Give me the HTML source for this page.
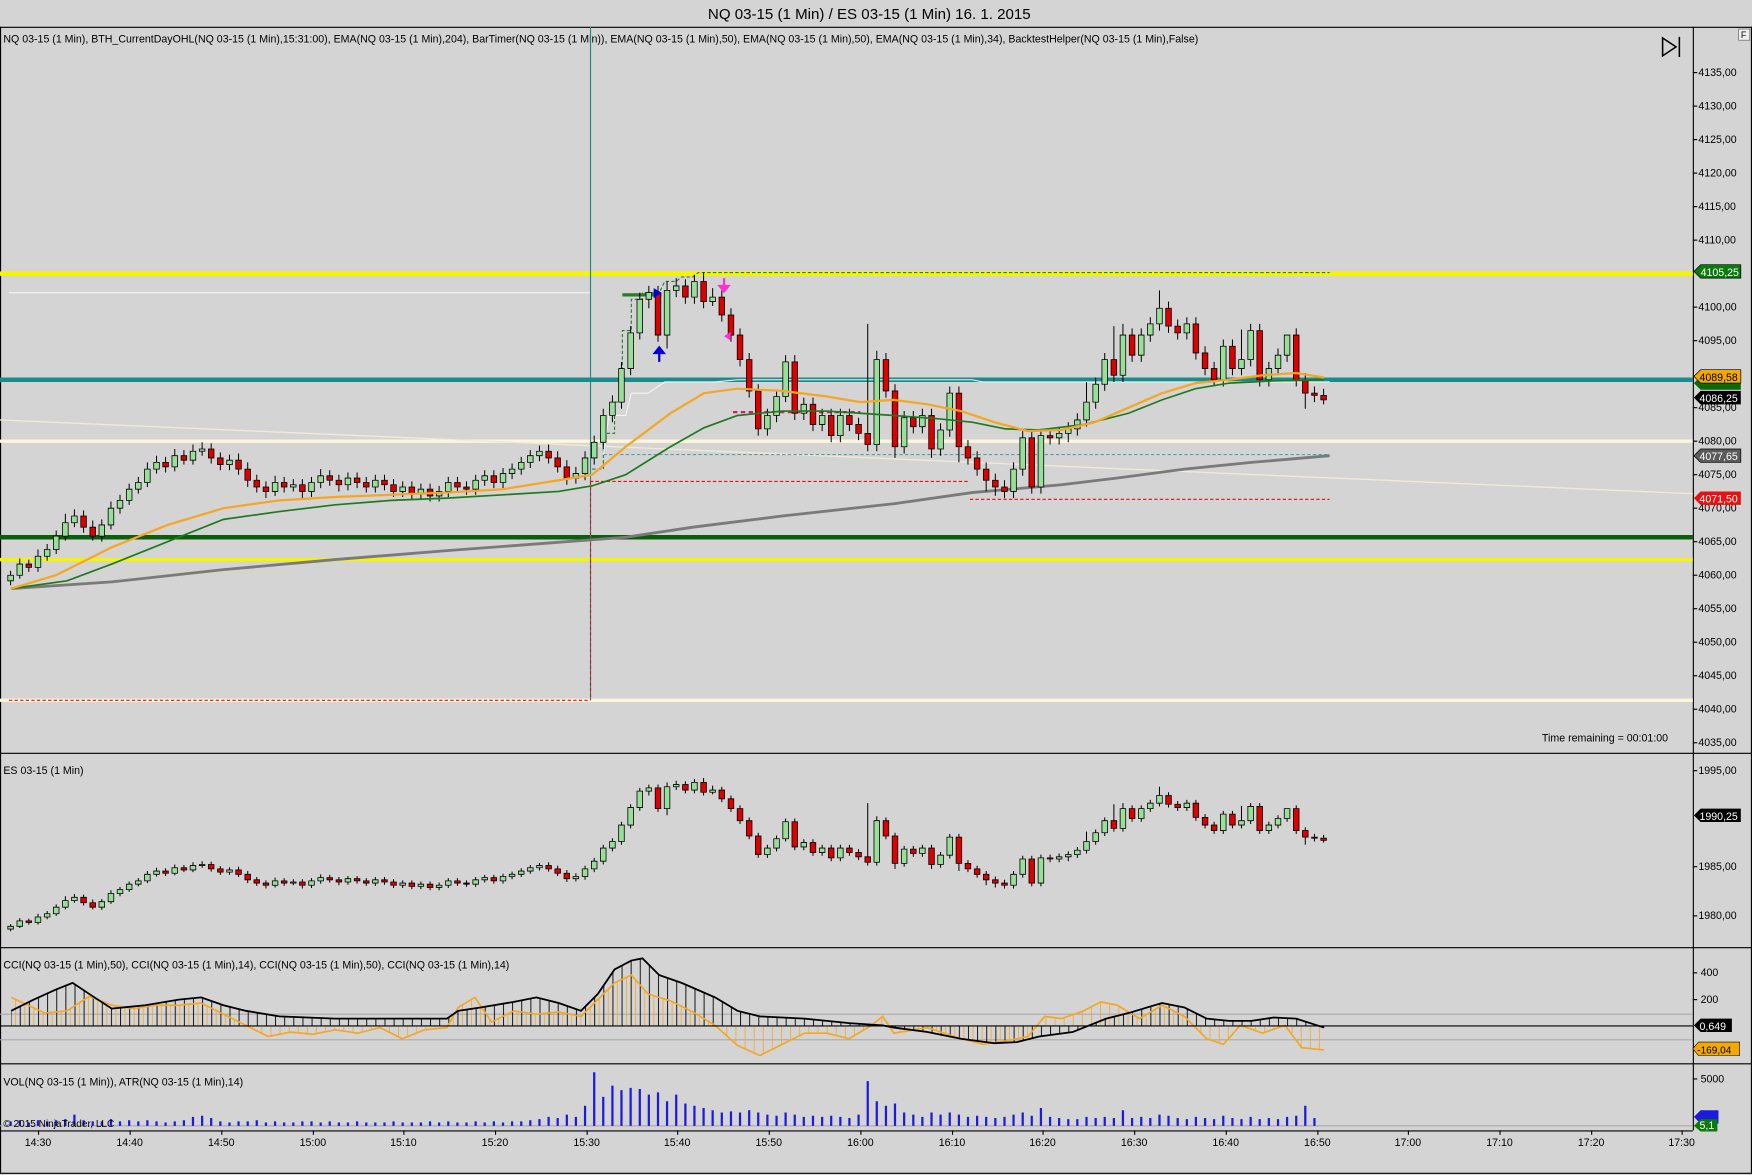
<!DOCTYPE html>
<html><head><meta charset="utf-8">
<style>
html,body{margin:0;padding:0;background:#d4d4d4;overflow:hidden}
svg{display:block}
text{font-family:"Liberation Sans",Arial,sans-serif;fill:#000}
</style></head>
<body>
<svg xmlns="http://www.w3.org/2000/svg" xmlns:xlink="http://www.w3.org/1999/xlink" width="1752" height="1175" viewBox="0 0 1568 1052" preserveAspectRatio="none">
<defs>
<pattern id="hb" x="9.5" y="0" width="8.16" height="20" patternUnits="userSpaceOnUse"><line x1="0.5" y1="0" x2="0.5" y2="20" stroke="#000" stroke-width="0.8"/></pattern>
<pattern id="ho" x="13.5" y="0" width="8.16" height="20" patternUnits="userSpaceOnUse"><line x1="0.5" y1="0" x2="0.5" y2="20" stroke="#f5a623" stroke-width="0.7"/></pattern>
</defs>
<rect x="0" y="0" width="1568" height="1052" fill="#d4d4d4"/>
<text x="778" y="17" font-size="13.5" text-anchor="middle">NQ 03-15 (1 Min) / ES 03-15 (1 Min)  16. 1. 2015</text>
<g stroke="#000" stroke-width="1" fill="none">
<line x1="0" y1="24.5" x2="1568" y2="24.5"/>
<line x1="0" y1="674.5" x2="1568" y2="674.5"/>
<line x1="0" y1="848.5" x2="1568" y2="848.5"/>
<line x1="0" y1="952.5" x2="1568" y2="952.5"/>
<line x1="0" y1="1012.5" x2="1515" y2="1012.5"/>
<line x1="1515.5" y1="24" x2="1515.5" y2="1012"/>
<line x1="0.5" y1="24" x2="0.5" y2="1050"/>
<line x1="0" y1="1050.5" x2="1568" y2="1050.5"/>
<line x1="1567.5" y1="24" x2="1567.5" y2="1050"/>
</g>
<rect x="1556" y="26" width="10" height="10" fill="#eee" stroke="#666" stroke-width="0.6"/>
<text x="1558" y="34" font-size="8">F</text>
<g stroke="#000" stroke-width="1.4" fill="none"><path d="M1488 34 L1500 42 L1488 50 Z"/><line x1="1503" y1="33" x2="1503" y2="51"/></g>

<text x="3" y="38" font-size="9.5">NQ 03-15 (1 Min), BTH_CurrentDayOHL(NQ 03-15 (1 Min),15:31:00), EMA(NQ 03-15 (1 Min),204), BarTimer(NQ 03-15 (1 Min)), EMA(NQ 03-15 (1 Min),50), EMA(NQ 03-15 (1 Min),50), EMA(NQ 03-15 (1 Min),34), BacktestHelper(NQ 03-15 (1 Min),False)</text>

<line x1="0" y1="245" x2="1515" y2="245" stroke="#f5f500" stroke-width="4"/>
<line x1="0" y1="340" x2="1515" y2="340" stroke="#1a8c8c" stroke-width="4"/>
<line x1="0" y1="395" x2="1515" y2="395" stroke="#fdf6dc" stroke-width="3"/>
<line x1="0" y1="481" x2="1515" y2="481" stroke="#0b5e0b" stroke-width="4"/>
<line x1="0" y1="501" x2="1515" y2="501" stroke="#f5f500" stroke-width="3"/>
<line x1="0" y1="627" x2="1515" y2="627" stroke="#fdf6dc" stroke-width="3"/>
<line x1="0" y1="376" x2="1515" y2="442" stroke="#f0ead6" stroke-width="1.2"/>
<line x1="8" y1="262" x2="528" y2="262" stroke="#f4f4f4" stroke-width="1"/>
<line x1="528.5" y1="24" x2="528.5" y2="627" stroke="#1a8c7c" stroke-width="1"/>
<g stroke="#e01010" stroke-width="1" stroke-dasharray="3,2" fill="none">
<line x1="8" y1="627" x2="528" y2="627"/>
<line x1="528.5" y1="431" x2="528.5" y2="627"/>
<line x1="528" y1="431" x2="868" y2="431"/>
<line x1="868" y1="447" x2="1190" y2="447"/>
</g>
<line x1="656" y1="369" x2="770" y2="369" stroke="#d02060" stroke-width="2" stroke-dasharray="4,3"/>
<polyline fill="none" stroke="#2a7a2a" stroke-width="1" stroke-dasharray="3,2" points="530,420 540,420 540,388 550,388 550,360 557,360 557,296 565,296 565,268 575,268 575,262 590,262 595,252 605,252 610,248 620,248 625,244 1190,244"/>
<line x1="540" y1="407" x2="1190" y2="407" stroke="#5aa0a0" stroke-width="1" stroke-dasharray="3,2"/>
<polyline fill="none" stroke="#f4f4f4" stroke-width="1" points="540,407 545,372 560,372 565,352 580,352 595,342 640,342 660,340 870,340 880,342 1190,342"/>
<polyline fill="none" stroke="#7a7a7a" stroke-width="2.5" points="10,527 100,521 200,510 300,501 400,493 480,487 560,481 620,472 700,462 800,451 870,441 950,434 1000,428 1060,420 1120,414 1190,408"/>
<line x1="557" y1="264" x2="592" y2="264" stroke="#2a7a2a" stroke-width="3"/>

<g id="cd">
<path vector-effect="non-scaling-stroke" fill="none" stroke="#000" stroke-width="1" d="M9.5,511V524 M17.7,500V518 M25.8,501V512 M34,492V512 M42.2,487V502 M50.3,475V496 M58.5,460V484 M66.6,456V472 M74.8,457V477 M83,466V484 M91.1,465V485 M99.3,449V474 M107.4,443V460 M115.6,433V452 M123.8,427V442 M131.9,414V436 M140.1,408V424 M148.2,409V423 M156.4,402V422 M164.6,403V416 M172.7,398V416 M180.9,396V408 M189,397V415 M197.2,405V421 M205.4,407V421 M213.5,406V425 M221.7,414V436 M229.8,425V441 M238,431V446 M246.2,426V444 M254.3,427V441 M262.5,429V440 M270.6,429V446 M278.8,427V445 M287,420V437 M295.1,421V435 M303.3,425V440 M311.4,423V439 M319.6,423V437 M327.8,427V441 M335.9,425V441 M344.1,425V439 M352.2,429V445 M360.4,431V445 M368.6,431V447 M376.7,433V447 M384.9,433V449 M393,435V449 M401.2,427V445 M409.4,427V441 M417.5,431V443 M425.7,425V443 M433.8,421V435 M442,421V437 M450.2,419V437 M458.3,415V429 M466.5,409V425 M474.6,403V419 M482.8,399V413 M491,398V415 M499.1,404V423 M507.3,412V434 M515.4,418V433 M523.6,404V430 M531.8,390V416 M539.9,366V402 M548.1,354V378 M556.2,324V366 M564.4,292V336 M572.6,262V304 M580.7,256V276 M588.9,256V306 M597,252V312 M605.2,249V266 M613.4,250V272 M621.5,246V272 M629.7,244V276 M637.8,258V274 M646,260V288 M654.2,276V306 M662.3,294V328 M670.5,316V356 M678.6,344V390 M686.8,366V390 M695,349V378 M703.1,318V360 M711.3,318V376 M719.4,356V376 M727.6,356V386 M735.8,366V386 M743.9,366V396 M752.1,366V396 M760.2,366V386 M768.4,374V394 M776.6,290V404 M784.7,314V404 M792.9,316V356 M801,344V410 M809.2,368V406 M817.4,368V388 M825.5,366V388 M833.7,366V410 M841.8,379V408 M850,346V391 M858.2,346V414 M866.3,394V416 M874.5,404V426 M882.6,414V440 M890.8,424V444 M899,430V446 M907.1,414V446 M915.3,386V426 M923.4,386V442 M931.6,384V442 M939.8,384V398 M947.9,382V398 M956.1,378V396 M964.2,370V390 M972.4,342V382 M980.6,338V366 M988.7,316V350 M996.9,292V342 M1005,290V342 M1013.2,294V324 M1021.4,294V324 M1029.5,284V306 M1037.7,260V296 M1045.8,270V298 M1054,286V304 M1062.2,284V304 M1070.3,284V322 M1078.5,310V336 M1086.6,324V346 M1094.8,304V346 M1103,304V336 M1111.1,295V336 M1119.3,290V328 M1127.4,290V346 M1135.6,324V346 M1143.8,312V336 M1151.9,300V324 M1160.1,294V346 M1168.2,334V366 M1176.4,346V360 M1184.6,348V362"/>
<path vector-effect="non-scaling-stroke" fill="#98e098" stroke="#000" stroke-width="0.8" d="M7,515h5v5h-5z M15.2,505h5v10h-5z M31.5,498h5v10h-5z M39.7,492h5v6h-5z M47.8,480h5v12h-5z M56,468h5v12h-5z M64.1,462h5v6h-5z M88.6,470h5v10h-5z M96.8,455h5v15h-5z M104.9,448h5v7h-5z M113.1,438h5v10h-5z M121.3,432h5v6h-5z M129.4,420h5v12h-5z M137.6,414h5v6h-5z M153.9,408h5v10h-5z M170.2,404h5v8h-5z M178.4,402h5v2h-5z M202.9,412h5v4h-5z M243.7,432h5v8h-5z M260,434h5v2h-5z M276.3,432h5v8h-5z M284.5,426h5v6h-5z M308.9,428h5v6h-5z M333.4,430h5v6h-5z M357.9,436h5v4h-5z M374.2,438h5v4h-5z M390.5,440h5v4h-5z M398.7,432h5v8h-5z M423.2,430h5v8h-5z M431.3,426h5v4h-5z M447.7,424h5v8h-5z M455.8,420h5v4h-5z M464,414h5v6h-5z M472.1,408h5v6h-5z M480.3,404h5v4h-5z M512.9,424h5v4h-5z M521.1,410h5v14h-5z M529.3,396h5v14h-5z M537.4,372h5v24h-5z M545.6,360h5v12h-5z M553.7,330h5v30h-5z M561.9,298h5v32h-5z M570.1,268h5v30h-5z M578.2,262h5v6h-5z M594.5,260h5v40h-5z M602.7,256h5v4h-5z M619,252h5v14h-5z M635.3,266h5v4h-5z M684.3,372h5v12h-5z M692.5,355h5v17h-5z M700.6,324h5v31h-5z M716.9,362h5v8h-5z M733.3,372h5v8h-5z M749.6,372h5v18h-5z M782.2,322h5v76h-5z M806.7,374h5v26h-5z M823,372h5v10h-5z M839.3,385h5v17h-5z M847.5,352h5v33h-5z M904.6,420h5v20h-5z M912.8,392h5v28h-5z M929.1,390h5v46h-5z M945.4,388h5v4h-5z M953.6,384h5v4h-5z M961.7,376h5v8h-5z M969.9,360h5v16h-5z M978.1,344h5v16h-5z M986.2,322h5v22h-5z M1002.5,300h5v36h-5z M1018.9,300h5v18h-5z M1027,290h5v10h-5z M1035.2,276h5v14h-5z M1059.7,290h5v8h-5z M1092.3,310h5v30h-5z M1108.6,322h5v8h-5z M1116.8,296h5v26h-5z M1133.1,330h5v10h-5z M1141.3,318h5v12h-5z M1149.4,300h5v18h-5z"/>
<path vector-effect="non-scaling-stroke" fill="#dd0000" stroke="#000" stroke-width="0.8" d="M23.3,505h5v3h-5z M72.3,462h5v10h-5z M80.5,472h5v8h-5z M145.7,414h5v4h-5z M162.1,408h5v4h-5z M186.5,402h5v8h-5z M194.7,410h5v6h-5z M211,412h5v8h-5z M219.2,420h5v10h-5z M227.3,430h5v6h-5z M235.5,436h5v4h-5z M251.8,432h5v4h-5z M268.1,434h5v6h-5z M292.6,426h5v4h-5z M300.8,430h5v4h-5z M317.1,428h5v4h-5z M325.3,432h5v4h-5z M341.6,430h5v4h-5z M349.7,434h5v6h-5z M366.1,436h5v6h-5z M382.4,438h5v6h-5z M406.9,432h5v4h-5z M415,436h5v2h-5z M439.5,426h5v6h-5z M488.5,404h5v6h-5z M496.6,410h5v8h-5z M504.8,418h5v10h-5z M586.4,262h5v38h-5z M610.9,256h5v10h-5z M627.2,252h5v18h-5z M643.5,266h5v16h-5z M651.7,282h5v18h-5z M659.8,300h5v22h-5z M668,322h5v28h-5z M676.1,350h5v34h-5z M708.8,324h5v46h-5z M725.1,362h5v18h-5z M741.4,372h5v18h-5z M757.7,372h5v8h-5z M765.9,380h5v8h-5z M774.1,388h5v10h-5z M790.4,322h5v28h-5z M798.5,350h5v50h-5z M814.9,374h5v8h-5z M831.2,372h5v30h-5z M855.7,352h5v48h-5z M863.8,400h5v10h-5z M872,410h5v10h-5z M880.1,420h5v10h-5z M888.3,430h5v6h-5z M896.5,436h5v4h-5z M920.9,392h5v44h-5z M937.3,390h5v2h-5z M994.4,322h5v14h-5z M1010.7,300h5v18h-5z M1043.3,276h5v16h-5z M1051.5,292h5v6h-5z M1067.8,290h5v26h-5z M1076,316h5v14h-5z M1084.1,330h5v10h-5z M1100.5,310h5v20h-5z M1124.9,296h5v44h-5z M1157.6,300h5v40h-5z M1165.7,340h5v12h-5z M1173.9,352h5v2h-5z M1182.1,354h5v4h-5z"/>
</g>
<use xlink:href="#cd" href="#cd" transform="translate(0,577) scale(1,0.49)"/>

<polyline fill="none" stroke="#1e7a1e" stroke-width="1.5" points="10,527 60,520 100,505 150,485 200,465 250,458 300,452 350,448 400,446 450,443 500,440 530,435 560,425 600,400 630,383 660,372 700,368 740,368 770,370 800,372 840,375 870,378 900,384 930,385 970,380 1010,370 1040,358 1070,348 1100,343 1140,341 1185,340"/>
<polyline fill="none" stroke="#f5a623" stroke-width="2" points="10,527 50,515 100,490 150,470 200,455 250,448 300,445 350,443 400,441 450,438 500,430 530,425 560,400 600,370 630,352 660,348 700,350 740,355 770,360 800,358 830,362 860,368 890,378 920,386 950,385 980,378 1010,365 1040,352 1070,343 1100,340 1130,336 1160,334 1185,338"/>

<path d="M590 324 L590 316 L586 316 L590 311 L594 316 L590 316" fill="#0000dd" stroke="#0000dd" stroke-width="2"/>
<path d="M585 258 L592 262 L585 267 Z" fill="#0000dd"/>
<path d="M648 249 L648 256 L644 256 L648 261 L652 256 L648 256" fill="#ff30d0" stroke="#ff30d0" stroke-width="2"/>
<path d="M654 297 L648 301 L654 305 Z" fill="#ff30d0"/>

<text x="1380" y="664" font-size="9.5">Time remaining = 00:01:00</text>

<g stroke="#aaa" stroke-width="1"><line x1="0" y1="908" x2="1515" y2="908"/><line x1="0" y1="931" x2="1515" y2="931"/><line x1="0" y1="1008" x2="1515" y2="1008"/></g>

<!-- CCI -->
<polygon fill="url(#ho)" points="10,919 10,893 25,900 40,907 60,905 80,892 100,900 120,903 140,900 160,900 180,898 200,908 220,918 240,928 260,924 280,926 300,922 320,925 340,920 360,930 380,922 400,920 410,902 425,893 440,915 460,905 480,908 500,906 520,910 535,895 550,880 565,873 580,890 600,896 620,906 640,918 660,936 680,945 700,935 720,925 740,925 760,930 780,918 790,910 800,925 830,920 860,930 880,935 900,932 920,928 935,910 950,912 970,905 985,897 1000,900 1020,912 1040,900 1060,910 1080,930 1095,935 1110,918 1130,925 1150,918 1165,938 1185,940 1185,919"/>
<polygon fill="url(#hb)" points="10,919 10,905 30,895 50,886 65,880 80,890 100,903 130,900 160,895 180,893 200,900 220,905 250,910 300,912 350,912 400,912 410,905 430,902 460,897 480,893 500,898 520,905 535,890 550,868 565,860 575,858 590,873 610,880 640,893 660,905 680,910 720,912 760,916 790,918 800,920 830,924 860,930 890,934 910,933 930,928 960,924 990,912 1010,907 1040,898 1060,902 1080,912 1100,914 1120,914 1140,911 1160,912 1185,920 1185,919"/>
<polyline fill="none" stroke="#f5a623" stroke-width="1.5" points="10,893 25,900 40,907 60,905 80,892 100,900 120,903 140,900 160,900 180,898 200,908 220,918 240,928 260,924 280,926 300,922 320,925 340,920 360,930 380,922 400,920 410,902 425,893 440,915 460,905 480,908 500,906 520,910 535,895 550,880 565,873 580,890 600,896 620,906 640,918 660,936 680,945 700,935 720,925 740,925 760,930 780,918 790,910 800,925 830,920 860,930 880,935 900,932 920,928 935,910 950,912 970,905 985,897 1000,900 1020,912 1040,900 1060,910 1080,930 1095,935 1110,918 1130,925 1150,918 1165,938 1185,940"/>
<polyline fill="none" stroke="#000" stroke-width="1.6" points="10,905 30,895 50,886 65,880 80,890 100,903 130,900 160,895 180,893 200,900 220,905 250,910 300,912 350,912 400,912 410,905 430,902 460,897 480,893 500,898 520,905 535,890 550,868 565,860 575,858 590,873 610,880 640,893 660,905 680,910 720,912 760,916 790,918 800,920 830,924 860,930 890,934 910,933 930,928 960,924 990,912 1010,907 1040,898 1060,902 1080,912 1100,914 1120,914 1140,911 1160,912 1185,920"/>
<line x1="0" y1="918.5" x2="1515" y2="918.5" stroke="#000" stroke-width="1"/>

<!-- Volume -->
<path fill="none" stroke="#1a1ae0" stroke-width="2" d="M9.5,1008v-4 M17.7,1008v-5 M25.8,1008v-3 M34,1008v-5 M42.2,1008v-4 M50.3,1008v-5 M58.5,1008v-6 M66.6,1008v-10 M74.8,1008v-5 M83,1008v-4 M91.1,1008v-4 M99.3,1008v-6 M107.4,1008v-4 M115.6,1008v-5 M123.8,1008v-4 M131.9,1008v-5 M140.1,1008v-4 M148.2,1008v-3 M156.4,1008v-4 M164.6,1008v-5 M172.7,1008v-8 M180.9,1008v-9 M189,1008v-7 M197.2,1008v-4 M205.4,1008v-3 M213.5,1008v-4 M221.7,1008v-4 M229.8,1008v-5 M238,1008v-3 M246.2,1008v-4 M254.3,1008v-3 M262.5,1008v-3 M270.6,1008v-4 M278.8,1008v-4 M287,1008v-3 M295.1,1008v-4 M303.3,1008v-3 M311.4,1008v-3 M319.6,1008v-4 M327.8,1008v-3 M335.9,1008v-3 M344.1,1008v-3 M352.2,1008v-4 M360.4,1008v-3 M368.6,1008v-3 M376.7,1008v-3 M384.9,1008v-4 M393,1008v-3 M401.2,1008v-4 M409.4,1008v-3 M417.5,1008v-3 M425.7,1008v-4 M433.8,1008v-3 M442,1008v-4 M450.2,1008v-3 M458.3,1008v-4 M466.5,1008v-4 M474.6,1008v-5 M482.8,1008v-6 M491,1008v-8 M499.1,1008v-7 M507.3,1008v-10 M515.4,1008v-8 M523.6,1008v-18 M531.8,1008v-48 M539.9,1008v-26 M548.1,1008v-36 M556.2,1008v-32 M564.4,1008v-34 M572.6,1008v-33 M580.7,1008v-28 M588.9,1008v-30 M597,1008v-22 M605.2,1008v-28 M613.4,1008v-20 M621.5,1008v-18 M629.7,1008v-16 M637.8,1008v-14 M646,1008v-12 M654.2,1008v-13 M662.3,1008v-12 M670.5,1008v-14 M678.6,1008v-12 M686.8,1008v-10 M695,1008v-9 M703.1,1008v-12 M711.3,1008v-10 M719.4,1008v-8 M727.6,1008v-9 M735.8,1008v-8 M743.9,1008v-9 M752.1,1008v-8 M760.2,1008v-7 M768.4,1008v-10 M776.6,1008v-40 M784.7,1008v-22 M792.9,1008v-18 M801,1008v-20 M809.2,1008v-12 M817.4,1008v-10 M825.5,1008v-8 M833.7,1008v-12 M841.8,1008v-10 M850,1008v-12 M858.2,1008v-10 M866.3,1008v-8 M874.5,1008v-9 M882.6,1008v-8 M890.8,1008v-7 M899,1008v-8 M907.1,1008v-10 M915.3,1008v-12 M923.4,1008v-9 M931.6,1008v-16 M939.8,1008v-8 M947.9,1008v-7 M956.1,1008v-6 M964.2,1008v-6 M972.4,1008v-8 M980.6,1008v-7 M988.7,1008v-8 M996.9,1008v-7 M1005,1008v-14 M1013.2,1008v-7 M1021.4,1008v-8 M1029.5,1008v-7 M1037.7,1008v-10 M1045.8,1008v-9 M1054,1008v-7 M1062.2,1008v-6 M1070.3,1008v-8 M1078.5,1008v-7 M1086.6,1008v-6 M1094.8,1008v-9 M1103,1008v-7 M1111.1,1008v-6 M1119.3,1008v-8 M1127.4,1008v-6 M1135.6,1008v-7 M1143.8,1008v-6 M1151.9,1008v-8 M1160.1,1008v-9 M1168.2,1008v-18 M1176.4,1008v-7"/>

<g font-size="9.5">
<text x="1520" y="68">4135,00</text><text x="1520" y="98">4130,00</text><text x="1520" y="128">4125,00</text><text x="1520" y="158">4120,00</text><text x="1520" y="188">4115,00</text><text x="1520" y="218">4110,00</text><text x="1520" y="278">4100,00</text><text x="1520" y="308">4095,00</text><text x="1520" y="368">4085,00</text><text x="1520" y="398">4080,00</text><text x="1520" y="428">4075,00</text><text x="1520" y="458">4070,00</text><text x="1520" y="488">4065,00</text><text x="1520" y="518">4060,00</text><text x="1520" y="548">4055,00</text><text x="1520" y="578">4050,00</text><text x="1520" y="608">4045,00</text><text x="1520" y="638">4040,00</text><text x="1520" y="668">4035,00</text>
<text x="1520" y="693">1995,00</text><text x="1520" y="779">1985,00</text><text x="1520" y="823">1980,00</text>
<text x="1522" y="874">400</text><text x="1522" y="898">200</text><text x="1522" y="969">5000</text>
</g>
<g stroke="#000" stroke-width="1">
<line x1="1515" y1="65" x2="1519" y2="65"/><line x1="1515" y1="95" x2="1519" y2="95"/><line x1="1515" y1="125" x2="1519" y2="125"/><line x1="1515" y1="155" x2="1519" y2="155"/><line x1="1515" y1="185" x2="1519" y2="185"/><line x1="1515" y1="215" x2="1519" y2="215"/><line x1="1515" y1="275" x2="1519" y2="275"/><line x1="1515" y1="305" x2="1519" y2="305"/><line x1="1515" y1="365" x2="1519" y2="365"/><line x1="1515" y1="395" x2="1519" y2="395"/><line x1="1515" y1="425" x2="1519" y2="425"/><line x1="1515" y1="455" x2="1519" y2="455"/><line x1="1515" y1="485" x2="1519" y2="485"/><line x1="1515" y1="515" x2="1519" y2="515"/><line x1="1515" y1="545" x2="1519" y2="545"/><line x1="1515" y1="575" x2="1519" y2="575"/><line x1="1515" y1="605" x2="1519" y2="605"/><line x1="1515" y1="635" x2="1519" y2="635"/><line x1="1515" y1="665" x2="1519" y2="665"/>
<line x1="1515" y1="690" x2="1519" y2="690"/><line x1="1515" y1="776" x2="1519" y2="776"/><line x1="1515" y1="820" x2="1519" y2="820"/><line x1="1515" y1="871" x2="1519" y2="871"/><line x1="1515" y1="895" x2="1519" y2="895"/><line x1="1515" y1="966" x2="1519" y2="966"/>
<line x1="34.5" y1="1012" x2="34.5" y2="1016"/><line x1="116.5" y1="1012" x2="116.5" y2="1016"/><line x1="198.5" y1="1012" x2="198.5" y2="1016"/><line x1="280.5" y1="1012" x2="280.5" y2="1016"/><line x1="361.5" y1="1012" x2="361.5" y2="1016"/><line x1="443.5" y1="1012" x2="443.5" y2="1016"/><line x1="525.5" y1="1012" x2="525.5" y2="1016"/><line x1="606.5" y1="1012" x2="606.5" y2="1016"/><line x1="688.5" y1="1012" x2="688.5" y2="1016"/><line x1="770.5" y1="1012" x2="770.5" y2="1016"/><line x1="852.5" y1="1012" x2="852.5" y2="1016"/><line x1="933.5" y1="1012" x2="933.5" y2="1016"/><line x1="1015.5" y1="1012" x2="1015.5" y2="1016"/><line x1="1097.5" y1="1012" x2="1097.5" y2="1016"/><line x1="1179.5" y1="1012" x2="1179.5" y2="1016"/><line x1="1260.5" y1="1012" x2="1260.5" y2="1016"/><line x1="1342.5" y1="1012" x2="1342.5" y2="1016"/><line x1="1424.5" y1="1012" x2="1424.5" y2="1016"/><line x1="1505.5" y1="1012" x2="1505.5" y2="1016"/>
</g>

<g font-size="9.5">
<path d="M1516 243 L1522 237 L1558 237 L1558 249 L1522 249 Z" fill="#0a7a0a" stroke="#000" stroke-width="0.6"/><text x="1522" y="247" style="fill:#fff">4105,25</text>
<path d="M1516 343 L1522 337 L1558 337 L1558 349 L1522 349 Z" fill="#0a6a0a"/>
<path d="M1516 337 L1522 331 L1558 331 L1558 343 L1522 343 Z" fill="#f5a800" stroke="#000" stroke-width="0.6"/><text x="1521" y="341">4089,58</text>
<path d="M1516 356 L1522 350 L1558 350 L1558 362 L1522 362 Z" fill="#000"/><text x="1521" y="360" style="fill:#fff">4086,25</text>
<path d="M1516 408 L1522 402 L1558 402 L1558 414 L1522 414 Z" fill="#5a5a5a" stroke="#000" stroke-width="0.6"/><text x="1521" y="412" style="fill:#fff">4077,65</text>
<path d="M1516 446 L1522 440 L1558 440 L1558 452 L1522 452 Z" fill="#e81010"/><text x="1521" y="450" style="fill:#fff">4071,50</text>
<path d="M1516 730 L1522 724 L1558 724 L1558 736 L1522 736 Z" fill="#000"/><text x="1521" y="734" style="fill:#fff">1990,25</text>
<path d="M1516 918 L1522 912 L1550 912 L1550 924 L1522 924 Z" fill="#000"/><text x="1521" y="922" style="fill:#fff">0,649</text>
<path d="M1515 939 L1520 933 L1557 933 L1557 945 L1520 945 Z" fill="#f5a800" stroke="#000" stroke-width="0.5"/><text x="1519" y="943" font-size="9">-169,04</text>
<path d="M1516 1000 L1522 994 L1538 994 L1538 1006 L1522 1006 Z" fill="#1a1ae0"/>
<path d="M1516 1008 L1522 1002 L1537 1002 L1537 1013 L1522 1013 Z" fill="#0a7a0a"/><text x="1521" y="1011" style="fill:#fff">5,1</text>
</g>

<text x="3" y="693" font-size="9.5">ES 03-15 (1 Min)</text>
<text x="3" y="867" font-size="9.5">CCI(NQ 03-15 (1 Min),50), CCI(NQ 03-15 (1 Min),14), CCI(NQ 03-15 (1 Min),50), CCI(NQ 03-15 (1 Min),14)</text>
<text x="3" y="972" font-size="9.5">VOL(NQ 03-15 (1 Min)), ATR(NQ 03-15 (1 Min),14)</text>
<text x="3" y="1009" font-size="9">© 2015 NinjaTrader, LLC</text>

<g font-size="9.5" text-anchor="middle">
<text x="34" y="1026">14:30</text><text x="116" y="1026">14:40</text><text x="198" y="1026">14:50</text><text x="280" y="1026">15:00</text><text x="361" y="1026">15:10</text><text x="443" y="1026">15:20</text><text x="525" y="1026">15:30</text><text x="606" y="1026">15:40</text><text x="688" y="1026">15:50</text><text x="770" y="1026">16:00</text><text x="852" y="1026">16:10</text><text x="933" y="1026">16:20</text><text x="1015" y="1026">16:30</text><text x="1097" y="1026">16:40</text><text x="1179" y="1026">16:50</text><text x="1260" y="1026">17:00</text><text x="1342" y="1026">17:10</text><text x="1424" y="1026">17:20</text><text x="1505" y="1026">17:30</text>
</g>
</svg>
</body></html>
